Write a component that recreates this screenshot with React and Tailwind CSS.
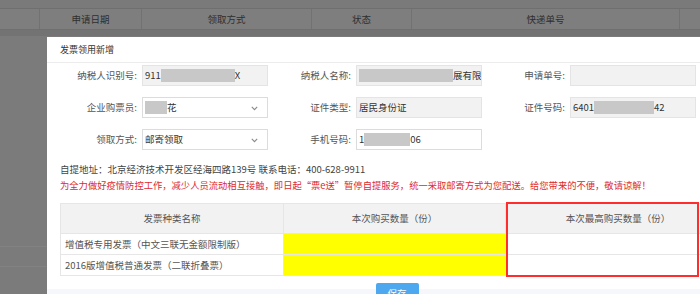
function Chevron() {
  return (
    <svg className="absolute right-[9px] top-[8px]" width="7" height="5" viewBox="0 0 7 5">
      <path d="M0.8 0.8 L3.5 3.6 L6.2 0.8" fill="none" stroke="#8a8a8a" strokeWidth="1.1" />
    </svg>
  );
}

function Blur({ w }) {
  return <span className="inline-block h-[13px] bg-[#c8c8c8] shrink-0" style={{ width: w }} />;
}

function Field({ label, children, disabled, select, empty }) {
  if (empty) return <div />;
  return (
    <div className="flex items-center h-[21px]">
      <div className="w-[88px] pr-[5px] text-right text-[9.5px] text-[#555] whitespace-nowrap">{label}</div>
      <div
        className={
          disabled
            ? "relative w-[126px] h-[21px] border border-[#e4e4e4] bg-[#f2f2f2] flex items-center px-[2px] text-[9.5px] text-[#333] overflow-hidden whitespace-nowrap"
            : "relative w-[126px] h-[21px] border border-[#dcdcdc] bg-white flex items-center px-[2px] text-[9.5px] text-[#333] overflow-hidden whitespace-nowrap"
        }
      >
        {children}
        {select && <Chevron />}
      </div>
    </div>
  );
}

export default function App() {
  return (
    <div className="relative w-[700px] h-[294px] overflow-hidden bg-[#7b7b7b] font-['Noto_Sans_CJK_SC',sans-serif]">
      {/* background page (under overlay) */}
      <div className="h-[8px] bg-[#7a7a7a]" />
      <div className="flex h-[22px] border-y border-[#6f6f6f] bg-[#7e7e7e] text-[9.5px] text-[#2e2e2e]">
        <div className="w-[40px] border-r border-[#727272]" />
        <div className="w-[102px] border-r border-[#727272] flex items-center justify-center">申请日期</div>
        <div className="w-[170px] border-r border-[#727272] flex items-center justify-center">领取方式</div>
        <div className="w-[100px] border-r border-[#727272] flex items-center justify-center">状态</div>
        <div className="w-[268px] border-r border-[#727272] flex items-center justify-center">快递单号</div>
        <div className="flex-1" />
      </div>
      <div className="h-[6px] bg-[#737373]" />
      <div className="h-[210px]" />
      <div className="h-[20px] border-t border-[#828282]" />
      <div className="h-[20px] border-t border-[#828282]" />

      {/* modal */}
      <div className="absolute left-[47px] top-[37px] w-[700px] bg-white">
        <div className="h-[26px] border-b border-[#ececec] pl-[13px] flex items-center text-[9px] text-[#333]">
          发票领用新增
        </div>
        <div className="pl-[7px] pt-[2px] grid grid-cols-[214px_214px_215px] gap-y-[11px]">
          <Field label="纳税人识别号:" disabled>
            <span>911</span>
            <Blur w={74} />
            <span>X</span>
          </Field>
          <Field label="纳税人名称:" disabled>
            <Blur w={94} />
            <span>展有限公司</span>
          </Field>
          <Field label="申请单号:" disabled />

          <Field label="企业购票员:" select>
            <Blur w={22} />
            <span>花</span>
          </Field>
          <Field label="证件类型:" disabled>
            <span>居民身份证</span>
          </Field>
          <Field label="证件号码:" disabled>
            <span>6401</span>
            <Blur w={60} />
            <span>42</span>
          </Field>

          <Field label="领取方式:" select>
            <span>邮寄领取</span>
          </Field>
          <Field label="手机号码:">
            <span>1</span>
            <Blur w={46} />
            <span>06</span>
          </Field>
          <Field empty />
        </div>

        <div className="pl-[13px] mt-[11px] text-[9.5px] leading-[16px] whitespace-nowrap">
          <div className="text-[#444]">自提地址：北京经济技术开发区经海四路139号 联系电话：400-628-9911</div>
          <div className="text-[#dc2a2e] text-[9.3px]">
            为全力做好疫情防控工作，减少人员流动相互接触，即日起“票e送”暂停自提服务，统一采取邮寄方式为您配送。给您带来的不便，敬请谅解！
          </div>
        </div>

        <div className="relative ml-[13px] mt-[10px] w-[669px] text-[9.5px] text-[#555]">
          <div className="grid grid-cols-[223px_222px_224px] border border-[#e6e6e6]">
            <div className="h-[29px] bg-[#f2f2f2] border-r border-[#e6e6e6] flex items-center justify-center">发票种类名称</div>
            <div className="h-[29px] bg-[#f2f2f2] border-r border-[#e6e6e6] flex items-center justify-center">本次购买数量（份）</div>
            <div className="h-[29px] bg-[#f2f2f2] flex items-center justify-center">本次最高购买数量（份）</div>

            <div className="h-[21px] border-t border-r border-[#e6e6e6] flex items-center px-[4px]">增值税专用发票（中文三联无金额限制版）</div>
            <div className="h-[21px] border-t border-r border-[#e6e6e6] bg-[#ffff00]" />
            <div className="h-[21px] border-t border-[#e6e6e6]" />

            <div className="h-[21px] border-t border-r border-[#e6e6e6] flex items-center px-[4px]">2016版增值税普通发票（二联折叠票）</div>
            <div className="h-[21px] border-t border-r border-[#e6e6e6] bg-[#ffff00]" />
            <div className="h-[21px] border-t border-[#e6e6e6]" />
          </div>
          <div className="absolute left-[446px] top-[-1px] w-[193px] h-[75px] border-2 border-[#ff2d2d]" />
        </div>

        <div className="mt-[7px] h-[30px] flex justify-center bg-[linear-gradient(to_bottom,#ffffff_6px,#f5f7fa_6px)]">
          <div className="w-[43px] h-[20px] rounded-[2px] bg-[#4ea8f0] text-white text-[9.5px] flex items-center justify-center">
            保存
          </div>
        </div>
      </div>
    </div>
  );
}
